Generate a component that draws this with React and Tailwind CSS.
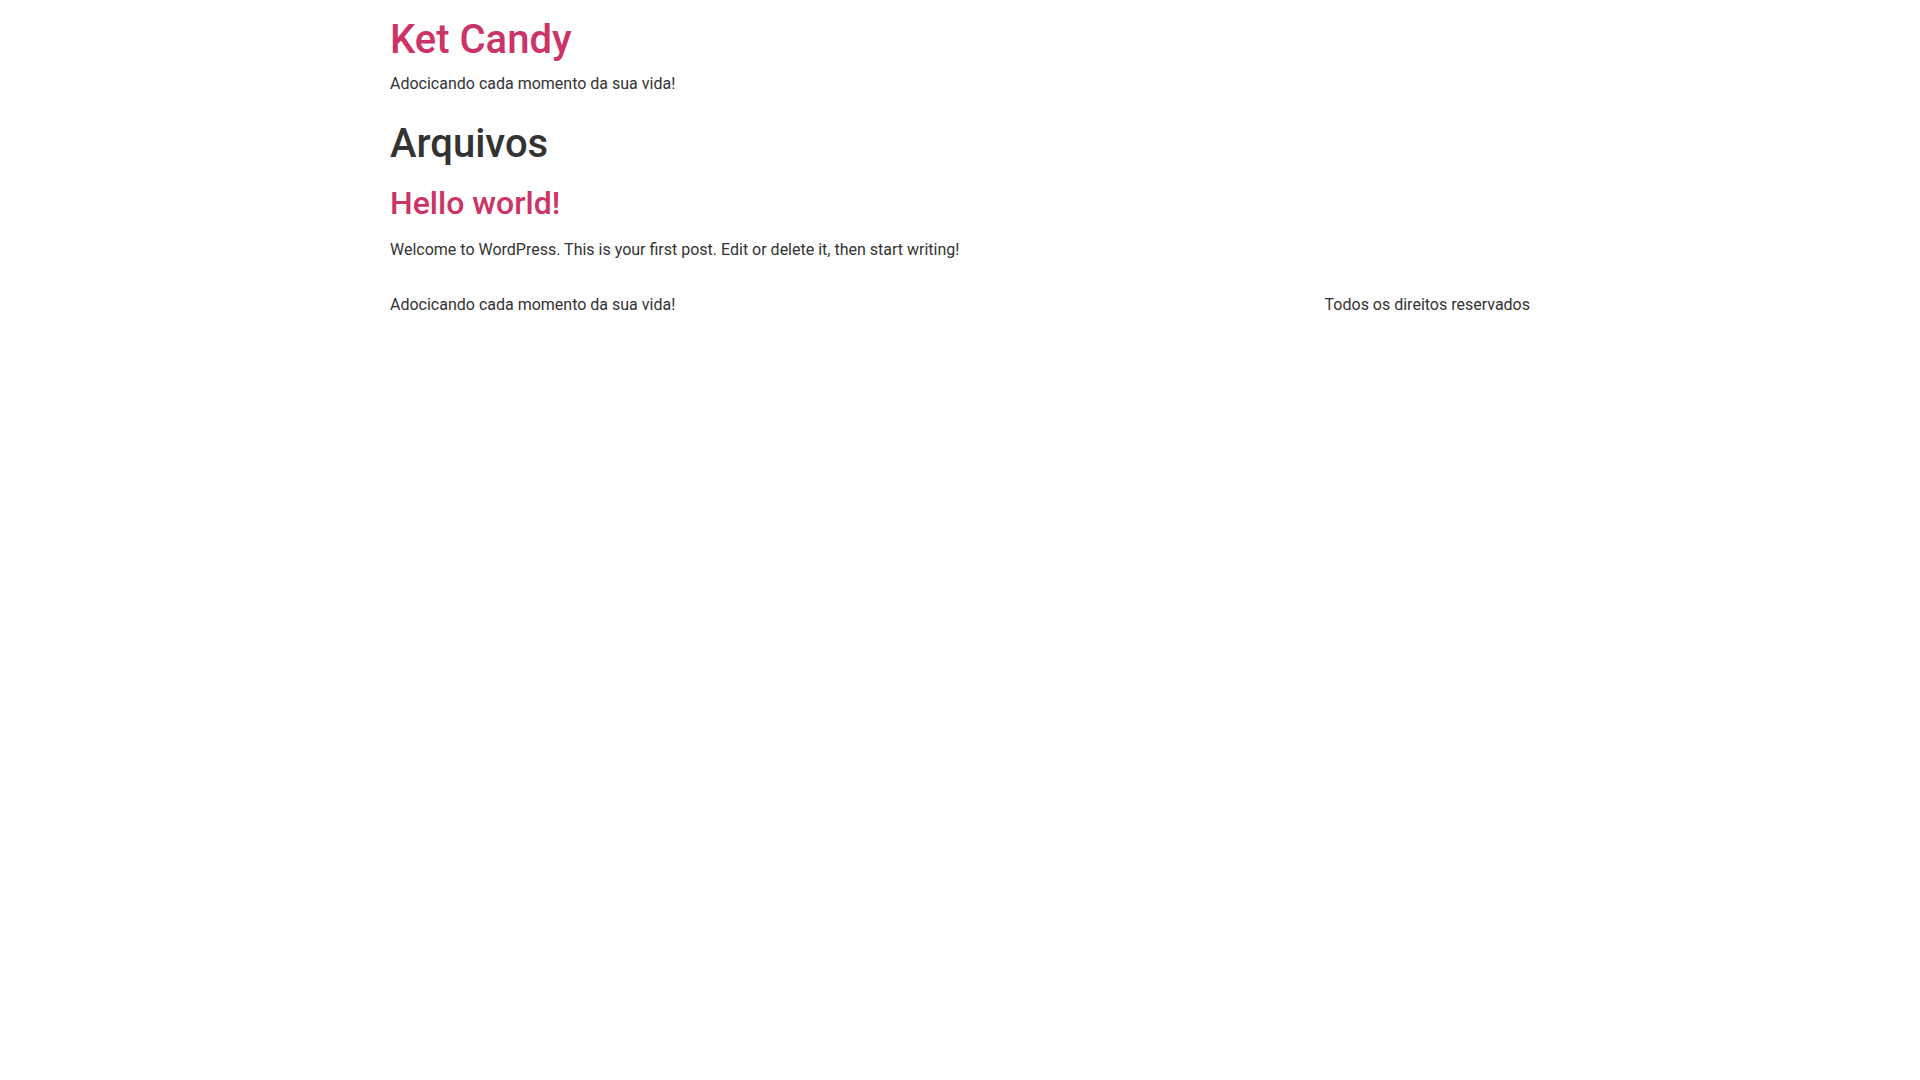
// App.jsx
const App = () => {
  return (
    <div className="min-h-screen bg-white text-[#333] font-['Roboto',sans-serif] text-base leading-6">
      <div className="w-[1140px] mx-auto">
        <header className="pt-4">
          <h1 className="text-[40px] leading-[48px] font-medium mb-2">
            <a href="#" className="text-[#c36]">Ket Candy</a>
          </h1>
          <p>Adocicando cada momento da sua vida!</p>
        </header>

        <main className="mt-[24px]">
          <h1 className="text-[40px] leading-[48px] font-medium">Arquivos</h1>
          <article className="mt-[16px]">
            <h2 className="text-[32px] leading-[38px] font-medium">
              <a href="#" className="text-[#c36]">Hello world!</a>
            </h2>
            <p className="mt-[16px]">
              Welcome to WordPress. This is your first post. Edit or delete it, then start writing!
            </p>
          </article>
        </main>

        <footer className="mt-[31px] flex justify-between">
          <p>Adocicando cada momento da sua vida!</p>
          <p>Todos os direitos reservados</p>
        </footer>
      </div>
    </div>
  );
};

export default App;
